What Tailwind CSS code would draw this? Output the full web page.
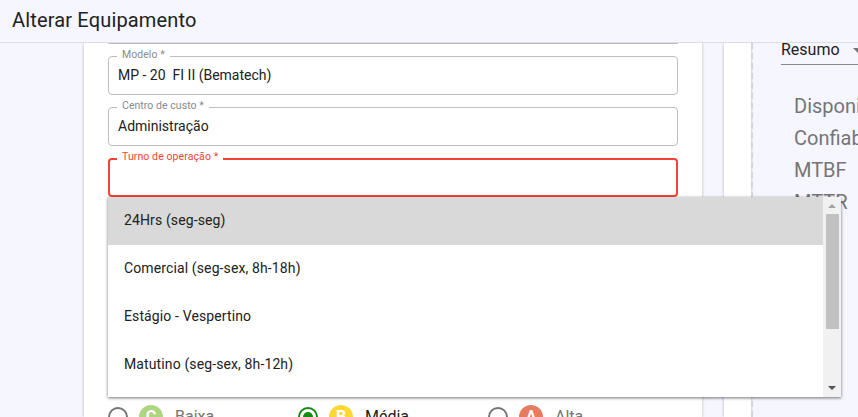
<!DOCTYPE html>
<html lang="pt-BR">
<head>
  <meta charset="utf-8"/>
  <title>Alterar Equipamento</title>
  <script src="https://cdn.jsdelivr.net/npm/@tailwindcss/browser@4"></script>
</head>
<body class="relative h-[417px] w-[858px] overflow-hidden bg-[#f5f6ff] font-['Roboto',sans-serif] text-[#212121]">
  <!-- Cabecalho -->
  <header class="flex h-[43px] items-center border-b border-[#dcdce4] bg-[#f5f6ff] pb-[3px] pl-3 text-[20px] leading-none tracking-[0.16px]">
    Alterar Equipamento
  </header>

  <main class="flex h-[374px] overflow-hidden">
    <!-- Formulario -->
    <section class="ml-[84px] h-full w-[618px] shrink-0 bg-white px-6 shadow-[0_0_3px_rgba(0,0,0,0.25)]">
      <div class="h-px rounded-b border-b border-[#bdbdbd]"></div>
      <div class="mt-3 flex flex-col gap-3">
        <div class="relative flex h-[39px] items-center rounded border border-[#bdbdbd] px-[9px] pb-[2px] text-sm">
          <span class="absolute -top-[8px] left-[8px] bg-white px-[5px] text-[10.5px] leading-[12px] tracking-[0.05px] text-[#8a8a8a]">Modelo *</span>
          MP - 20&nbsp; FI II (Bematech)
        </div>
        <div class="relative flex h-[39px] items-center rounded border border-[#bdbdbd] px-[9px] pb-[2px] text-sm">
          <span class="absolute -top-[8px] left-[8px] bg-white px-[5px] text-[10.5px] leading-[12px] tracking-[0.05px] text-[#8a8a8a]">Centro de custo *</span>
          Administração
        </div>
        <div class="relative h-[39px] rounded border-2 border-[#f44336]">
          <span class="absolute -top-[9px] left-[7px] bg-white px-[5px] text-[10.5px] leading-[12px] tracking-[0.1px] text-[#f44336]">Turno de operação *</span>
        </div>
      </div>

      <!-- Criticidade -->
      <div class="mt-[208px] flex">
        <div class="flex w-[190px] items-start gap-[11px]">
          <span class="mt-[2px] size-5 shrink-0 rounded-full border-2 border-[#757575]"></span>
          <span class="flex size-6 shrink-0 items-center justify-center rounded-full bg-[#aed581] text-base font-bold text-white">C</span>
          <span class="ml-[1px] text-base leading-6 text-[#757575]">Baixa</span>
        </div>
        <div class="flex w-[190px] items-start gap-[11px]">
          <span class="mt-[2px] flex size-5 shrink-0 items-center justify-center rounded-full border-2 border-[#138a13]">
            <span class="size-[10px] rounded-full bg-[#138a13]"></span>
          </span>
          <span class="flex size-6 shrink-0 items-center justify-center rounded-full bg-[#fdd835] text-base font-bold text-white">B</span>
          <span class="ml-[1px] text-base leading-6 text-[#212121]">Média</span>
        </div>
        <div class="flex w-[190px] items-start gap-[11px]">
          <span class="mt-[2px] size-5 shrink-0 rounded-full border-2 border-[#757575]"></span>
          <span class="flex size-6 shrink-0 items-center justify-center rounded-full bg-[#e57b5f] text-base font-bold text-white">A</span>
          <span class="ml-[1px] text-base leading-6 text-[#757575]">Alta</span>
        </div>
      </div>
    </section>

    <!-- Painel lateral -->
    <div class="ml-[22px] h-full w-[27px] shrink-0 bg-white shadow-[0_0_3px_rgba(0,0,0,0.25)]"></div>
    <aside class="min-w-0 flex-1 border-l-2 border-dashed border-[#d4d4dc] pl-[28px]">
      <div class="flex h-[22px] items-center justify-between border-b border-[#8a8a8a] pb-[7px] text-base leading-none">
        <span>Resumo</span>
        <span class="mr-[-5px] h-0 w-0 border-x-[5px] border-t-[5px] border-x-transparent border-t-[#757575]"></span>
      </div>
      <ul class="mt-[29px] ml-[13px] space-y-[8px] whitespace-nowrap text-[20px] leading-6 text-[#757575]">
        <li>Disponibilidade</li>
        <li>Confiabilidade</li>
        <li>MTBF</li>
        <li>MTTR</li>
      </ul>
    </aside>
  </main>

  <!-- Lista aberta do select -->
  <div class="absolute top-[197px] left-[108px] flex h-[200px] w-[733px] bg-white text-sm tracking-[0.12px] shadow-[0_1px_3px_rgba(0,0,0,0.55)]">
    <ul class="flex-1">
      <li class="flex h-12 items-center bg-[#d9d9d9] pb-[2px] pl-4">24Hrs (seg-seg)</li>
      <li class="flex h-12 items-center pb-[2px] pl-4">Comercial (seg-sex, 8h-18h)</li>
      <li class="flex h-12 items-center pb-[2px] pl-4">Estágio - Vespertino</li>
      <li class="flex h-12 items-center pb-[2px] pl-4">Matutino (seg-sex, 8h-12h)</li>
    </ul>
    <div class="flex w-[18px] shrink-0 flex-col items-center bg-[#f1f1f1]">
      <span class="mt-[7px] h-0 w-0 border-x-[4px] border-b-[4px] border-x-transparent border-b-[#a3a3a3]"></span>
      <span class="mt-[6px] h-[115px] w-[13px] bg-[#c1c1c1]"></span>
      <span class="mt-[57px] h-0 w-0 border-x-[4px] border-t-[4px] border-x-transparent border-t-[#505050]"></span>
    </div>
  </div>
</body>
</html>
